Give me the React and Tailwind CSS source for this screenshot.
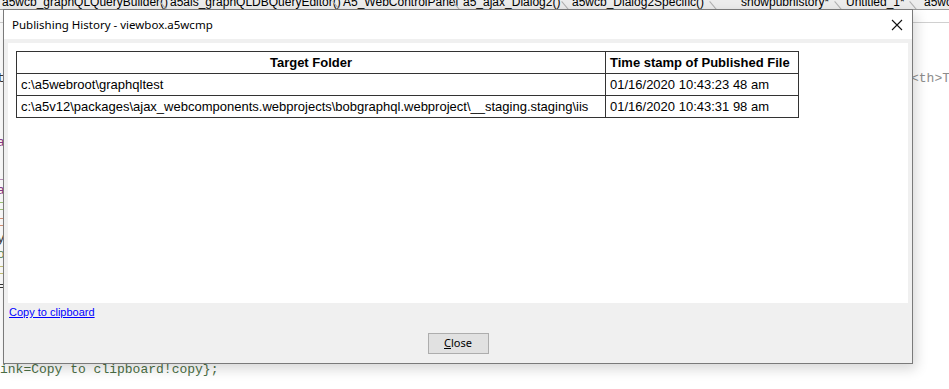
import React from 'react';

const tabs = [
  { label: 'a5wcb_graphQLQueryBuilder()', w: 'w-[168px] pl-[2px]' },
  { label: 'a5ais_graphQLDBQueryEditor()', w: 'w-[173px] pl-[2px]' },
  { label: 'A5_WebControlPanel', w: 'w-[120px] pl-[2px]' },
  { label: 'a5_ajax_Dialog2()', w: 'w-[109px] pl-[2px]' },
  { label: 'a5wcb_Dialog2Specific()', w: 'w-[148px] pl-[2px]' },
  { label: 'showpubhistory*', w: 'w-[125px] pl-[23px]' },
  { label: 'Untitled_1*', w: 'w-[75px] pl-[3px]' },
  { label: 'a5wcb_showpubhistory()', w: 'w-[160px] pl-[6px]' },
];

const rows = [
  ['c:\\a5webroot\\graphqltest', '01/16/2020 10:43:23 48 am'],
  [
    'c:\\a5v12\\packages\\ajax_webcomponents.webprojects\\bobgraphql.webproject\\__staging.staging\\iis',
    '01/16/2020 10:43:31 98 am',
  ],
];

// left gutter fragments of the code editor peeking out behind the dialog
const gutter = {
  3: { text: 't', cls: 'text-[#333]' },
  7: { text: 'a', cls: 'text-[#8b3a8b]' },
  9: { text: '_', cls: 'text-[#8b3a8b]' },
  10: { text: 'a', cls: 'text-[#8b3a8b]' },
  11: { text: '\u25a1', cls: 'text-[#55a000]' },
  12: { text: '\u25a1', cls: 'text-[#c04000]' },
  13: { text: 'y', cls: 'text-[#333]' },
  14: { text: 'o', cls: 'text-[#5a8a5a]' },
  15: { text: '\u25a1', cls: 'text-[#a09000]' },
  16: { text: '=', cls: 'text-[#333]' },
};

function TabStrip() {
  return (
    <div className="flex h-[10px] overflow-hidden border-b border-[#9a9a9a] bg-[#ececec] font-['Liberation_Sans',Arial,sans-serif]">
      {tabs.map((t) => (
        <div key={t.label} className={`relative flex shrink-0 items-end overflow-hidden ${t.w}`}>
          <span className="-mt-[6px] text-[12px] leading-[14px] text-black whitespace-nowrap">
            {t.label}
          </span>
          <span className="absolute right-[4px] top-0 h-[12px] w-[1px] bg-[#b0b0b0] -rotate-[40deg]" />
        </div>
      ))}
    </div>
  );
}

function Editor() {
  const lines = Array.from({ length: 23 });
  return (
    <div className="flex flex-col">
      <TabStrip />
      <div className="h-[13px] border-b border-[#d0d0d0]" />
      <div className="flex flex-col font-['Liberation_Mono',monospace] text-[13px] leading-[16px]">
        {lines.map((_, i) => (
          <div key={i} className="flex h-[16px] whitespace-pre">
            {i === 21 ? (
              <span className="pt-[3px] text-[#4b6f45]">ink=Copy to clipboard!copy};</span>
            ) : (
              <>
                <span className={`-ml-[3px] w-[8px] ${gutter[i]?.cls ?? ''}`}>{gutter[i]?.text ?? ''}</span>
                {i === 3 && <span className="ml-auto w-[38px] overflow-visible text-[#8c8c8c]">&lt;th&gt;T</span>}
              </>
            )}
          </div>
        ))}
      </div>
    </div>
  );
}

function HistoryTable() {
  return (
    <table className="border-collapse border border-[#333] font-['Liberation_Sans',Arial,sans-serif] text-[13px] text-black">
      <thead>
        <tr className="h-[22px]">
          <th className="w-[589px] border border-[#333] px-[4px] text-center font-bold">Target Folder</th>
          <th className="w-[193px] border border-[#333] px-[4px] text-left font-bold whitespace-nowrap">Time stamp of Published File</th>
        </tr>
      </thead>
      <tbody>
        {rows.map(([folder, stamp]) => (
          <tr key={folder} className="h-[22px]">
            <td className="border border-[#333] px-[4px] whitespace-nowrap">{folder}</td>
            <td className="border border-[#333] px-[4px] whitespace-nowrap">{stamp}</td>
          </tr>
        ))}
      </tbody>
    </table>
  );
}

function Dialog() {
  return (
    <div className="absolute left-[3px] top-[9px] flex h-[355px] w-[910px] flex-col border border-[#7a7a7a] bg-[#f0f0f0] shadow-[3px_5px_12px_rgba(0,0,0,0.16)] font-['Noto_Sans',sans-serif]">
      <div className="flex h-[29px] items-center bg-white pl-[8px] pr-[9px]">
        <span className="text-[11.5px] text-black">Publishing History - viewbox.a5wcmp</span>
        <svg className="ml-auto" width="12" height="12" viewBox="0 0 12 12">
          <path d="M1 1 L11 11 M11 1 L1 11" stroke="#111" strokeWidth="1.1" fill="none" />
        </svg>
      </div>
      <div className="flex flex-1 flex-col px-[4px] pt-[4px]">
        <div className="h-[260px] bg-white p-[8px]">
          <HistoryTable />
        </div>
        <a href="#" className="mt-[2px] self-start pl-[1px] font-['Liberation_Sans',Arial,sans-serif] text-[11px] leading-[15px] text-[#0000ff] underline">
          Copy to clipboard
        </a>
        <div className="flex justify-center pt-[13px]">
          <button className="h-[21px] w-[61px] border border-[#adadad] bg-[#e1e1e1] text-[11px] text-black">
            <span className="underline">C</span>lose
          </button>
        </div>
      </div>
    </div>
  );
}

export default function App() {
  return (
    <div className="relative h-[389px] w-[949px] overflow-hidden bg-white">
      <Editor />
      <Dialog />
    </div>
  );
}
